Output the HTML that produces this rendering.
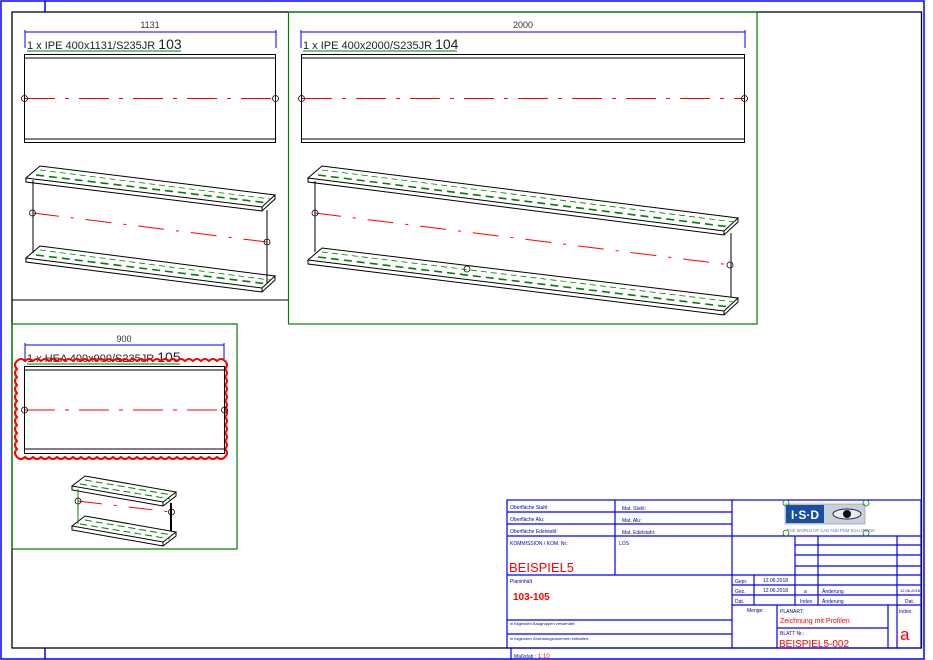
<!DOCTYPE html>
<html><head><meta charset="utf-8"><style>
html,body{margin:0;padding:0;background:#fff;width:933px;height:660px;overflow:hidden}
svg{display:block}
text{font-family:"Liberation Sans",sans-serif}
</style></head><body>
<svg width="933" height="660" viewBox="0 0 933 660" xmlns="http://www.w3.org/2000/svg">
<!-- outer blue frame -->
<g fill="none" stroke="#0000ff" stroke-width="1.5">
<rect x="1" y="1" width="923" height="658"/>
<line x1="45" y1="1" x2="45" y2="12"/>
<line x1="45" y1="648" x2="45" y2="659"/>
</g>
<rect x="12" y="12" width="909.5" height="636" fill="none" stroke="#000" stroke-width="1.3"/>
<!-- view frames -->
<line x1="12" y1="300" x2="288" y2="300" stroke="#000" stroke-width="1"/>
<rect x="288.5" y="12" width="468.5" height="312" fill="none" stroke="#008000" stroke-width="1.2"/>
<rect x="12" y="324" width="225" height="225" fill="none" stroke="#008000" stroke-width="1.2"/>

<!-- VIEW 103 -->
<g fill="none" stroke="#0000ff" stroke-width="1"><line x1="25" y1="32" x2="276" y2="32"/><line x1="25" y1="30" x2="25" y2="48"/><line x1="276" y1="30" x2="276" y2="48"/></g>
<text x="150" y="28" font-size="9" fill="#333" text-anchor="middle">1131</text>
<text x="27" y="49" font-size="11" fill="#222">1 x IPE 400x1131/S235JR <tspan font-size="14">103</tspan></text>
<line x1="27" y1="51" x2="181" y2="51" stroke="#008000"/>
<g fill="none" stroke="#000" stroke-width="1"><rect x="24.5" y="54.5" width="251" height="88"/><line x1="24.5" y1="58" x2="275.5" y2="58"/><line x1="24.5" y1="139" x2="275.5" y2="139"/></g>
<line x1="25" y1="98.5" x2="275" y2="98.5" stroke="#f00" stroke-dasharray="30 10 4 10"/>
<g fill="none" stroke="#000" stroke-width=".8"><circle cx="24.5" cy="98.5" r="3"/><circle cx="275.5" cy="98.5" r="3"/></g>
<!-- iso 103 -->
<g fill="none" stroke="#000" stroke-width="1">
<polygon points="26,178 40,166 275,195 262,207"/><polyline points="26,178 26,182 262,211 275,199 275,195"/><line x1="262" y1="207" x2="262" y2="211"/>
<line x1="33" y1="180" x2="33" y2="253"/><line x1="267" y1="210" x2="267" y2="283"/>
<polygon points="26,258 40,246 275,276 262,288"/><polyline points="26,258 26,262 262,292 275,280 275,276"/><line x1="262" y1="288" x2="262" y2="292"/>
</g>
<g stroke="#008000" stroke-width="1.6" stroke-dasharray="8 5"><line x1="36" y1="175" x2="268" y2="203"/><line x1="36" y1="255" x2="268" y2="284"/></g>
<g stroke="#008000" stroke-width=".8" stroke-dasharray="6 4"><line x1="40" y1="170" x2="270" y2="199"/><line x1="40" y1="250" x2="270" y2="280"/></g>
<line x1="33" y1="213" x2="267" y2="242" stroke="#f00" stroke-dasharray="26 12 3 12"/>
<g fill="none" stroke="#000" stroke-width=".8"><circle cx="32.5" cy="213" r="3"/><circle cx="267" cy="242" r="3"/></g>

<!-- VIEW 104 -->
<g fill="none" stroke="#0000ff" stroke-width="1"><line x1="301" y1="32" x2="745" y2="32"/><line x1="301" y1="30" x2="301" y2="48"/><line x1="745" y1="30" x2="745" y2="48"/></g>
<text x="523" y="28" font-size="9" fill="#333" text-anchor="middle">2000</text>
<text x="303" y="49" font-size="11" fill="#222">1 x IPE 400x2000/S235JR <tspan font-size="14">104</tspan></text>
<line x1="303" y1="51" x2="457" y2="51" stroke="#008000"/>
<g fill="none" stroke="#000" stroke-width="1"><rect x="301.5" y="54.5" width="443" height="88"/><line x1="301.5" y1="58" x2="744.5" y2="58"/><line x1="301.5" y1="139" x2="744.5" y2="139"/></g>
<line x1="302" y1="98.5" x2="744" y2="98.5" stroke="#f00" stroke-dasharray="30 10 4 10"/>
<g fill="none" stroke="#000" stroke-width=".8"><circle cx="301.5" cy="98.5" r="3"/><circle cx="744.5" cy="98.5" r="3"/></g>
<g fill="none" stroke="#000" stroke-width="1">
<polygon points="308,178 322,166 738,218 724,231"/><polyline points="308,178 308,182 724,235 738,222 738,218"/><line x1="724" y1="231" x2="724" y2="235"/>
<line x1="315" y1="181" x2="315" y2="252"/><line x1="731" y1="233" x2="731" y2="297"/>
<polygon points="308,260 322,248 738,298 724,311"/><polyline points="308,260 308,264 724,315 738,302 738,298"/><line x1="724" y1="311" x2="724" y2="315"/>
</g>
<g stroke="#008000" stroke-width="1.6" stroke-dasharray="8 5"><line x1="318" y1="175" x2="730" y2="227"/><line x1="318" y1="257" x2="730" y2="307"/></g>
<g stroke="#008000" stroke-width=".8" stroke-dasharray="6 4"><line x1="322" y1="170" x2="734" y2="222"/><line x1="322" y1="252" x2="734" y2="302"/></g>
<line x1="315" y1="213" x2="731" y2="265" stroke="#f00" stroke-dasharray="26 12 3 12"/>
<g fill="none" stroke="#000" stroke-width=".8"><circle cx="315" cy="213" r="3"/><circle cx="730" cy="265" r="3"/><circle cx="467" cy="269" r="3"/></g>

<!-- VIEW 105 -->
<g fill="none" stroke="#0000ff" stroke-width="1"><line x1="25" y1="345" x2="224" y2="345"/><line x1="25" y1="343" x2="25" y2="361"/><line x1="224" y1="343" x2="224" y2="361"/></g>
<text x="124" y="342" font-size="9" fill="#333" text-anchor="middle">900</text>
<text x="27" y="362" font-size="11" fill="#222">1 x HEA 400x900/S235JR <tspan font-size="14">105</tspan></text>
<line x1="27" y1="364" x2="180" y2="364" stroke="#008000"/>
<path fill="none" stroke="#f00" stroke-width="2" d="M17 361 q4 -4 8 0 q4 -4 8 0 q4 -4 8 0 q4 -4 8 0 q4 -4 8 0 q4 -4 8 0 q4 -4 8 0 q4 -4 8 0 q4 -4 8 0 q4 -4 8 0 q4 -4 8 0 q4 -4 8 0 q4 -4 8 0 q4 -4 8 0 q4 -4 8 0 q4 -4 8 0 q4 -4 8 0 q4 -4 8 0 q4 -4 8 0 q4 -4 8 0 q4 -4 8 0 q4 -4 8 0 q4 -4 8 0 q4 -4 8 0 q4 -4 8 0 q4 -4 8 0 q4 4 0 8 q4 4 0 8 q4 4 0 8 q4 4 0 8 q4 4 0 8 q4 4 0 8 q4 4 0 8 q4 4 0 8 q4 4 0 8 q4 4 0 8 q4 4 0 8 q4 4 0 8 q-4 4 -8 0 q-4 4 -8 0 q-4 4 -8 0 q-4 4 -8 0 q-4 4 -8 0 q-4 4 -8 0 q-4 4 -8 0 q-4 4 -8 0 q-4 4 -8 0 q-4 4 -8 0 q-4 4 -8 0 q-4 4 -8 0 q-4 4 -8 0 q-4 4 -8 0 q-4 4 -8 0 q-4 4 -8 0 q-4 4 -8 0 q-4 4 -8 0 q-4 4 -8 0 q-4 4 -8 0 q-4 4 -8 0 q-4 4 -8 0 q-4 4 -8 0 q-4 4 -8 0 q-4 4 -8 0 q-4 4 -8 0 q-4 -4 0 -8 q-4 -4 0 -8 q-4 -4 0 -8 q-4 -4 0 -8 q-4 -4 0 -8 q-4 -4 0 -8 q-4 -4 0 -8 q-4 -4 0 -8 q-4 -4 0 -8 q-4 -4 0 -8 q-4 -4 0 -8 q-4 -4 0 -8 Z"/>
<g fill="none" stroke="#000" stroke-width="1"><rect x="24.5" y="366.5" width="200" height="87"/><line x1="24.5" y1="370" x2="224.5" y2="370"/><line x1="24.5" y1="449" x2="224.5" y2="449"/></g>
<line x1="25" y1="410" x2="224" y2="410" stroke="#f00" stroke-dasharray="30 10 4 10"/>
<g fill="none" stroke="#000" stroke-width=".8"><circle cx="24.5" cy="410" r="3"/><circle cx="224.5" cy="410" r="3"/></g>
<g fill="none" stroke="#000" stroke-width="1">
<polygon points="72,486 85,476 176,492 163,502"/><polyline points="72,486 72,490 163,506 176,496 176,492"/><line x1="163" y1="502" x2="163" y2="506"/>
<line x1="78" y1="489" x2="78" y2="524"/><line x1="171" y1="503" x2="171" y2="531" stroke-width="2"/>
<polygon points="72,526 85,516 176,532 163,542"/><polyline points="72,526 72,530 163,546 176,536 176,532"/><line x1="163" y1="542" x2="163" y2="546"/>
</g>
<g stroke="#008000" stroke-width="1" stroke-dasharray="7 4"><line x1="80" y1="484" x2="170" y2="499"/><line x1="80" y1="524" x2="170" y2="539"/><line x1="85" y1="480" x2="172" y2="495"/><line x1="85" y1="520" x2="172" y2="535"/></g>
<line x1="78" y1="489" x2="78" y2="524" stroke="#008000"/>
<line x1="78" y1="501" x2="171" y2="512" stroke="#f00" stroke-dasharray="24 12 3 12"/>
<g fill="none" stroke="#000" stroke-width=".8"><circle cx="78" cy="501" r="3"/><circle cx="171.5" cy="512" r="3"/></g>

<!-- TITLE BLOCK -->
<g fill="none" stroke="#0000ff" stroke-width="1.2">
<rect x="507" y="500" width="414" height="148"/>
<line x1="507" y1="512" x2="732" y2="512"/><line x1="507" y1="524" x2="732" y2="524"/><line x1="507" y1="536" x2="921" y2="536"/>
<line x1="615" y1="500" x2="615" y2="575"/><line x1="732" y1="500" x2="732" y2="648"/>
<line x1="507" y1="575" x2="921" y2="575"/><line x1="507" y1="620" x2="732" y2="620"/><line x1="507" y1="634" x2="732" y2="634"/>
<line x1="795" y1="536" x2="795" y2="605"/><line x1="818" y1="536" x2="818" y2="605"/><line x1="897" y1="536" x2="897" y2="648"/>
<line x1="795" y1="545" x2="921" y2="545"/><line x1="795" y1="555" x2="921" y2="555"/><line x1="795" y1="566" x2="921" y2="566"/>
<line x1="732" y1="585" x2="921" y2="585"/><line x1="732" y1="595" x2="921" y2="595"/><line x1="732" y1="605" x2="921" y2="605"/>
<line x1="754" y1="575" x2="754" y2="605"/>
<line x1="777" y1="605" x2="777" y2="648"/><line x1="888" y1="605" x2="888" y2="648"/><line x1="777" y1="628" x2="888" y2="628"/>
<line x1="511" y1="648" x2="511" y2="660"/>
</g>
<g font-size="5" fill="#0000aa">
<text x="510" y="509">Oberfläche  Stahl:</text><text x="622" y="510">Mat. Stahl:</text>
<text x="510" y="521">Oberfläche  Alu:</text><text x="622" y="522">Mat. Alu:</text>
<text x="510" y="533">Oberfläche  Edelstahl:</text><text x="622" y="534">Mat.  Edelstahl:</text>
<text x="510" y="545">KOMMISSION / KOM. Nr.:</text><text x="619" y="545">LOS</text>
<text x="510" y="583">Planinhalt</text>
<text x="510" y="625" font-size="4">in folgenden Baugruppen verwendet:</text>
<text x="510" y="640" font-size="4">in folgenden Zeichnungsnummern enthalten:</text>
<text x="735" y="583">Gepr.</text><text x="735" y="593">Gez.</text><text x="735" y="603">Dat.</text>
<text x="763" y="582">12.06.2018</text><text x="763" y="592">12.06.2018</text>
<text x="804" y="593">a</text><text x="800" y="603">Index</text>
<text x="822" y="593">Änderung</text><text x="822" y="603">Änderung</text>
<text x="900" y="592" font-size="4">12.06.2018</text><text x="905" y="603">Dat.</text>
<text x="747" y="612">Menge:</text><text x="780" y="613">PLANART:</text><text x="780" y="635">BLATT Nr.:</text>
<text x="899" y="613">Index:</text>
<text x="514" y="658">Maßstab :</text>
</g>
<g fill="#ff0000">
<text x="509" y="572" font-size="13">BEISPIEL5</text>
<text x="513" y="600" font-size="10" font-weight="bold">103-105</text>
<text x="780" y="623" font-size="7">Zeichnung mit Profilen</text>
<text x="779" y="647" font-size="10">BEISPIEL5-002</text>
<text x="900" y="640" font-size="17">a</text>
<text x="538" y="658" font-size="6">1:10</text>
</g>
<!-- logo -->
<rect x="785" y="504" width="80" height="20" fill="#c8d0dc" stroke="#8894a8" stroke-width=".6"/>
<rect x="786" y="505" width="38" height="18" fill="#1a4fa0"/>
<text x="805" y="519" font-size="12" font-weight="bold" fill="#fff" text-anchor="middle">I·S·D</text>
<ellipse cx="847" cy="514" rx="14" ry="5" fill="#e8ecf0" stroke="#222" stroke-width="1"/>
<circle cx="847" cy="514" r="4" fill="#111"/>
<text x="787" y="532" font-size="4.2" fill="#5a78b0">THE WORLD OF CAD AND PDM SOLUTIONS</text>
<g fill="none" stroke="#008000" stroke-width=".8"><circle cx="786" cy="503" r="3"/><circle cx="866" cy="503" r="3"/><circle cx="786" cy="533" r="3"/><circle cx="866" cy="533" r="3"/></g>
</svg>
</body></html>
